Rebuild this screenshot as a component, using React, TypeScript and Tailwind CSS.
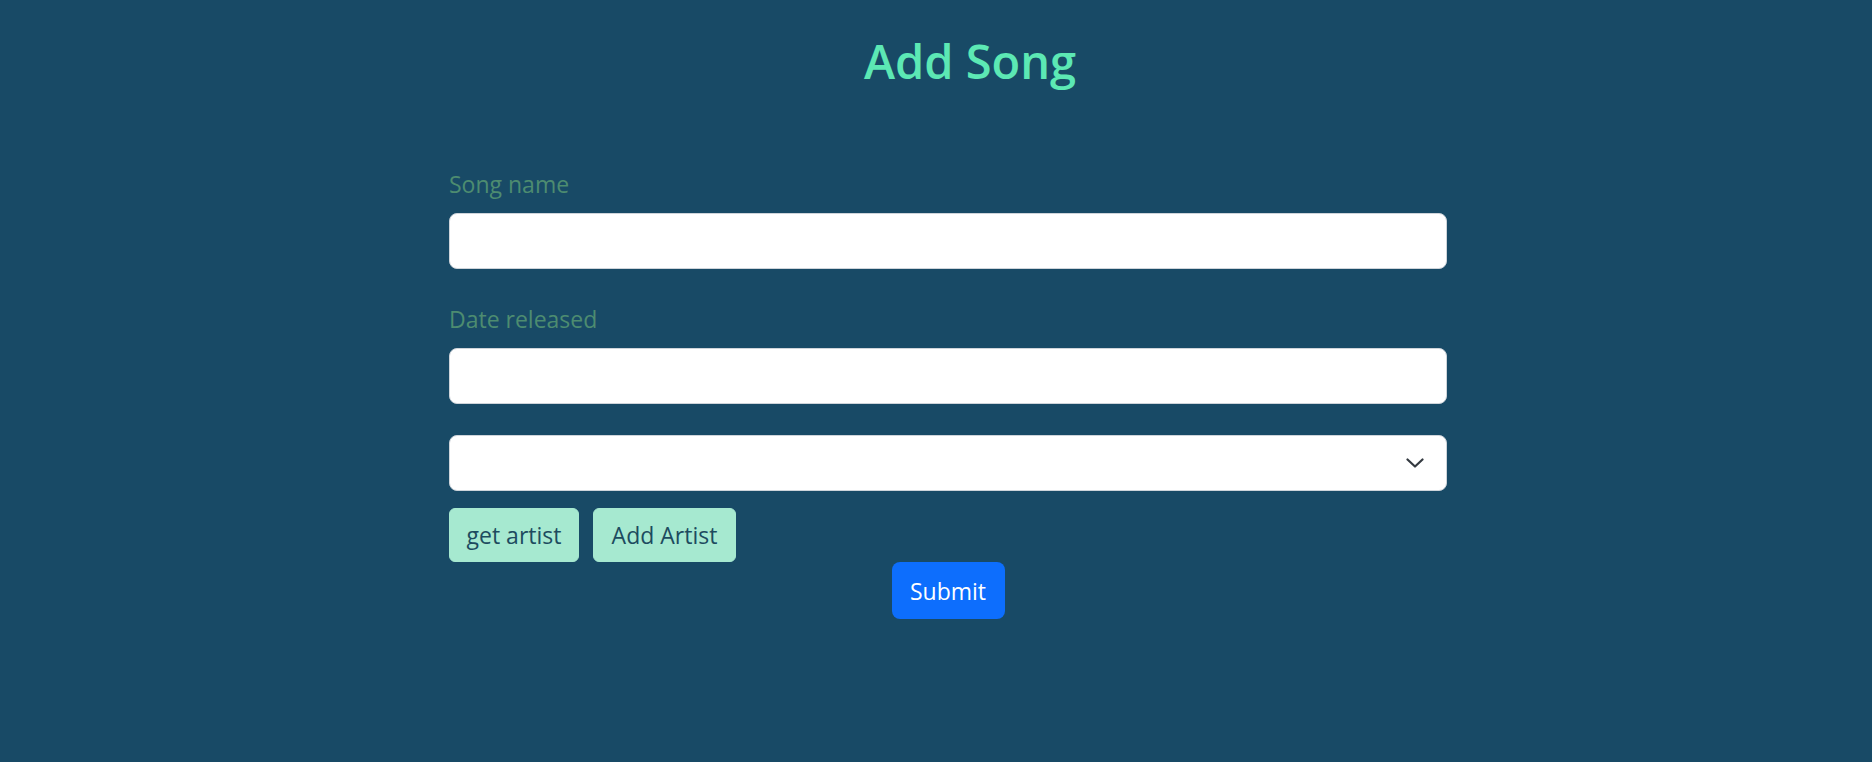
import { useState } from 'react'

function Chevron() {
    return (
        <svg width="18" height="10" viewBox="0 0 18 10" fill="none" className="pointer-events-none">
            <path d="M1.5 1.5L9 8.5L16.5 1.5" stroke="#343a40" strokeWidth="2.2" strokeLinecap="round" strokeLinejoin="round" />
        </svg>
    )
}

export default function App() {
    const [song, setSong] = useState('')
    const [date, setDate] = useState('')

    return (
        <div className="min-h-[762px] w-full bg-[#184a66] font-['Open_Sans','Noto_Sans',sans-serif]">
            <h2 className="pt-[33px] pl-[68px] text-center text-[47px] leading-[1.2] font-semibold text-[#5ce8b4]">
                Add Song
            </h2>

            <form className="ml-[449px] mt-[78px] flex w-[998px] flex-col" onSubmit={(e) => e.preventDefault()}>
                <label className="mb-[12px] text-[23px] leading-[34px] text-[#4d8c70]">Song name</label>
                <input
                    value={song}
                    onChange={(e) => setSong(e.target.value)}
                    className="h-[56px] w-full rounded-[8px] border border-[#ced4da] bg-white px-[18px] text-[22px] outline-none"
                />

                <label className="mt-[33px] mb-[12px] text-[23px] leading-[34px] text-[#4d8c70]">Date released</label>
                <input
                    value={date}
                    onChange={(e) => setDate(e.target.value)}
                    className="h-[56px] w-full rounded-[8px] border border-[#ced4da] bg-white px-[18px] text-[22px] outline-none"
                />

                <div className="mt-[31px] flex h-[56px] w-full items-center justify-end rounded-[8px] border border-[#ced4da] bg-white pr-[22px]">
                    <Chevron />
                </div>

                <div className="mt-[17px] flex gap-[14px]">
                    <button type="button" className="h-[54px] w-[130px] rounded-[6px] border border-[#a6e9d0] bg-[#a6e9d0] text-[23px] text-[#1d4b5f]">
                        get artist
                    </button>
                    <button type="button" className="h-[54px] w-[143px] rounded-[6px] border border-[#a6e9d0] bg-[#a6e9d0] text-[23px] text-[#1d4b5f]">
                        Add Artist
                    </button>
                </div>

                <div className="flex justify-center">
                    <button type="submit" className="h-[57px] w-[113px] rounded-[8px] bg-[#0d6efd] text-[23px] text-white">
                        Submit
                    </button>
                </div>
            </form>
        </div>
    )
}
